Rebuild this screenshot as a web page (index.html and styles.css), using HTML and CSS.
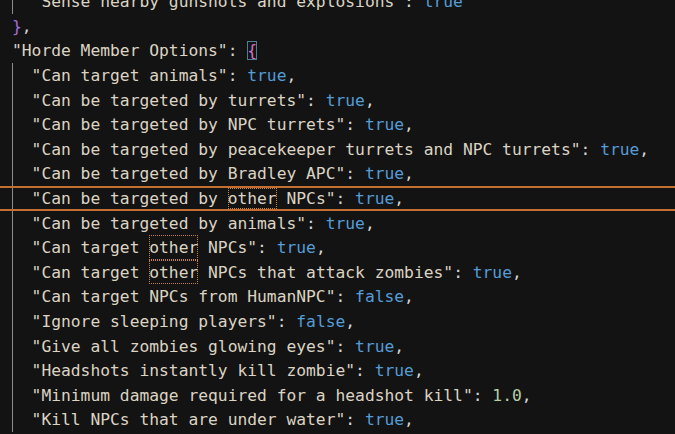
FILE: index.html
```html
<!DOCTYPE html>
<html>
<head>
<meta charset="utf-8">
<link rel="stylesheet" href="styles.css">
</head>
<body>
<div class="editor">
<div class="line g">  <span class="s">"Sense nearby gunshots and explosions"</span>: <span class="k">true</span></div>
<div class="line"><span class="br">}</span>,</div>
<div class="line"><span class="s">"Horde Member Options"</span>: <span class="br2 match">{</span></div>
<div class="line g">  <span class="s">"Can target animals"</span>: <span class="k">true</span>,</div>
<div class="line g">  <span class="s">"Can be targeted by turrets"</span>: <span class="k">true</span>,</div>
<div class="line g">  <span class="s">"Can be targeted by NPC turrets"</span>: <span class="k">true</span>,</div>
<div class="line g">  <span class="s">"Can be targeted by peacekeeper turrets and NPC turrets"</span>: <span class="k">true</span>,</div>
<div class="line g">  <span class="s">"Can be targeted by Bradley APC"</span>: <span class="k">true</span>,</div>
<div class="line g current">  <span class="s">"Can be targeted by <span class="occ">other</span> NPCs"</span>: <span class="k">true</span>,</div>
<div class="line g">  <span class="s">"Can be targeted by animals"</span>: <span class="k">true</span>,</div>
<div class="line g">  <span class="s">"Can target <span class="occ">other</span> NPCs"</span>: <span class="k">true</span>,</div>
<div class="line g">  <span class="s">"Can target <span class="occ">other</span> NPCs that attack zombies"</span>: <span class="k">true</span>,</div>
<div class="line g">  <span class="s">"Can target NPCs from HumanNPC"</span>: <span class="k">false</span>,</div>
<div class="line g">  <span class="s">"Ignore sleeping players"</span>: <span class="k">false</span>,</div>
<div class="line g">  <span class="s">"Give all zombies glowing eyes"</span>: <span class="k">true</span>,</div>
<div class="line g">  <span class="s">"Headshots instantly kill zombie"</span>: <span class="k">true</span>,</div>
<div class="line g">  <span class="s">"Minimum damage required for a headshot kill"</span>: <span class="n">1.0</span>,</div>
<div class="line g">  <span class="s">"Kill NPCs that are under water"</span>: <span class="k">true</span>,</div>
</div>
</body>
</html>
```

FILE: styles.css
```css
html, body {
  margin: 0;
  padding: 0;
  background: #131313;
  overflow: hidden;
}

.editor {
  margin-top: -10.8px;
  font-family: "DejaVu Sans Mono", "Liberation Mono", monospace;
  font-size: 16.3px;
  color: #d4d4d4;
}

.line {
  white-space: pre;
  height: 24.6px;
  line-height: 26.6px;
  padding-left: 12px;
  box-sizing: border-box;
}

.line.g {
  background: linear-gradient(#8c8c8c, #8c8c8c) no-repeat 12px 0 / 1px 100%;
}

.line.current {
  border-top: 2px solid #c46e34;
  border-bottom: 2px solid #c46e34;
  line-height: 22.6px;
  background-position: 12px -2px;
  background-size: 1px 24.6px;
}

.s { color: #dcd3c3; }
.k { color: #569cd6; }
.n { color: #b5cea8; }
.br { color: #a46fdc; }
.br2 { color: #d070cc; }

.match {
  outline: 1px solid #4f7f90;
  outline-offset: -1px;
}

.occ {
  display: inline-block;
  height: 24.6px;
  line-height: 26.6px;
  vertical-align: top;
  outline: 1px dotted #c8823c;
  outline-offset: -1px;
}

.current .occ {
  height: 20.6px;
  line-height: 22.6px;
}
```
